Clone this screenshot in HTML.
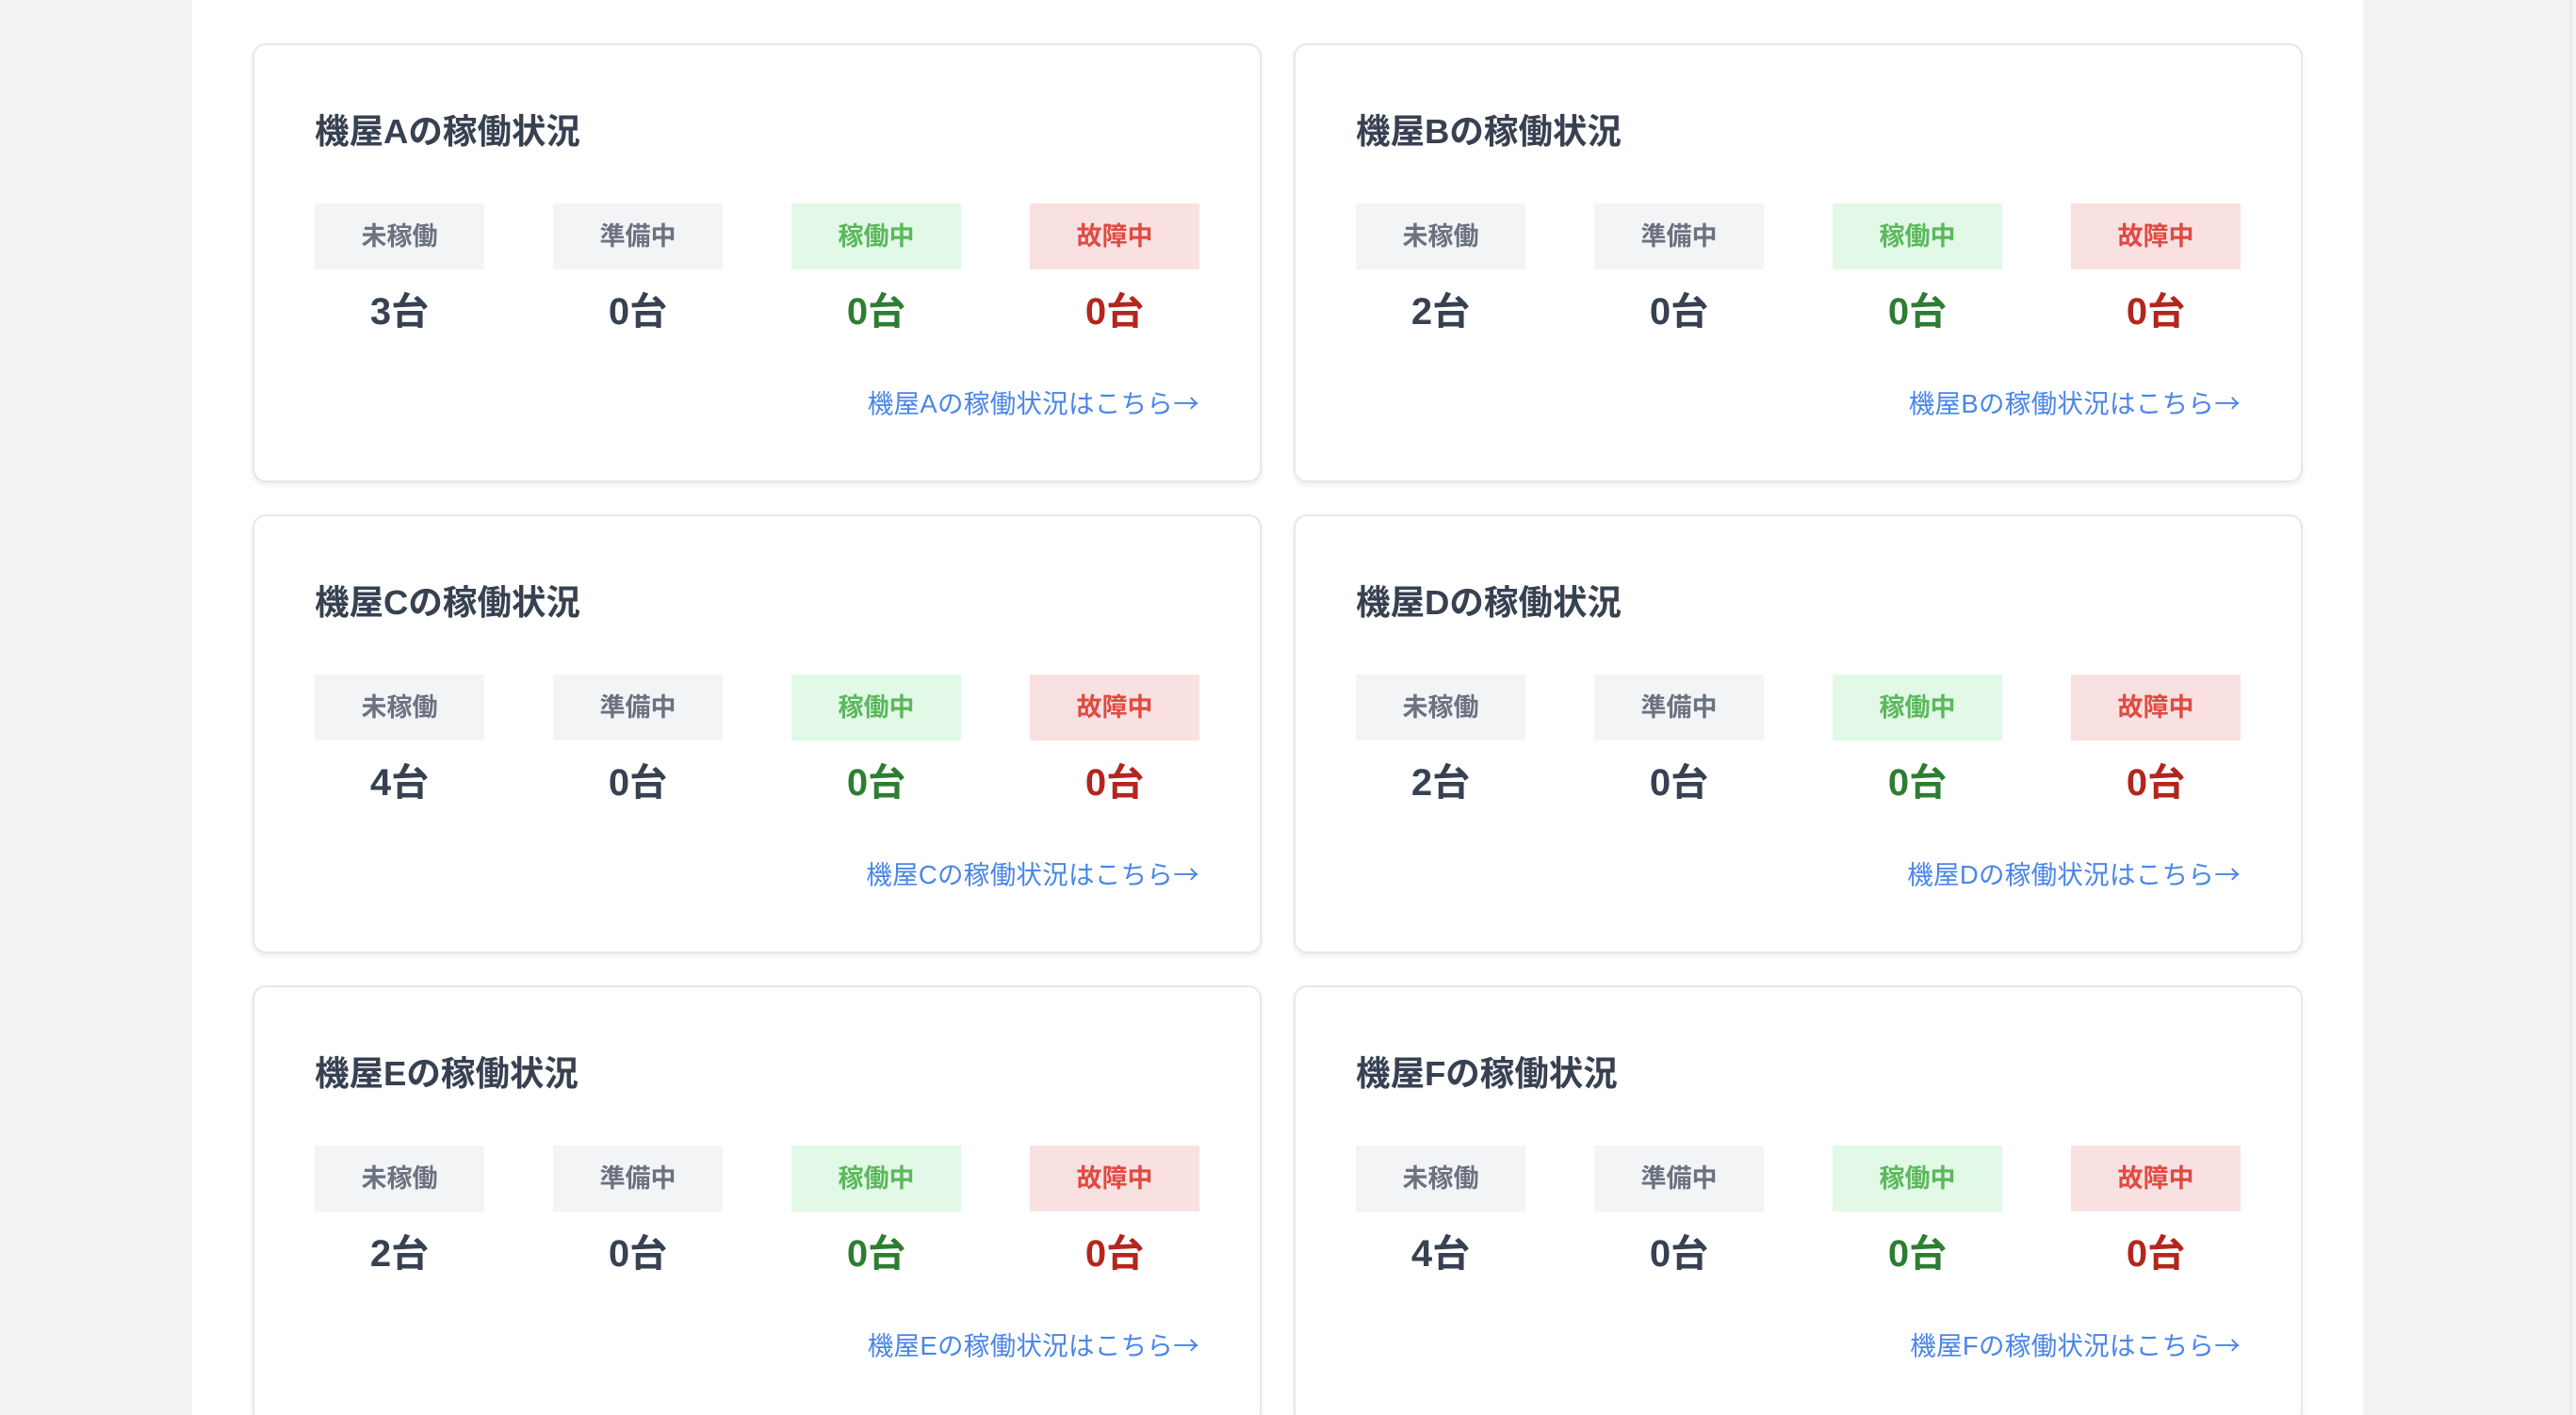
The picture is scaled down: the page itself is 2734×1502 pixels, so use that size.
<!DOCTYPE html>
<html><head><meta charset="utf-8"><style>
*{margin:0;padding:0;box-sizing:border-box}
html,body{width:2734px;height:1502px;overflow:hidden}
body{background:#f2f3f5;font-family:"Liberation Sans","Noto Sans CJK JP",sans-serif;position:relative}
.panel{position:absolute;left:204px;top:0;width:2304px;height:1502px;background:#fff}
.edge{position:absolute;left:2727px;top:0;width:7px;height:1502px;background:linear-gradient(90deg,#e6e7ea,#fafafa)}
.card{position:absolute;width:1071px;height:466px;background:#fff;border:2px solid #e5e7eb;border-radius:14px;box-shadow:0 3px 6px rgba(0,0,0,.07)}
.t{position:absolute;left:64px;top:70px;font-size:36.5px;font-weight:bold;color:#374151;line-height:44px}
.b{position:absolute;top:168px;width:180px;height:70px;line-height:70px;text-align:center;font-size:27px;font-weight:bold}
.n{position:absolute;top:258px;width:180px;text-align:center;font-size:40px;font-weight:bold;line-height:50px}
.g{background:#f3f4f6;color:#6b7280}
.gr{background:#e1f9e6;color:#5cb85c}
.r{background:#f9e1e1;color:#e04a42}
.l{position:absolute;right:64px;top:360px;font-size:27.5px;color:#4a86e8;line-height:36px;letter-spacing:0.3px}
.l span{font-family:"Noto Sans CJK JP",sans-serif}
</style></head><body>
<div class="panel"></div><div class="edge"></div>

<div class="card" style="left:268px;top:46px">
<div class="t">機屋Aの稼働状況</div>
<div class="b g" style="left:64px">未稼働</div><div class="b g" style="left:317px">準備中</div><div class="b gr" style="left:570px">稼働中</div><div class="b r" style="left:823px">故障中</div>
<div class="n" style="left:64px;color:#374151">3台</div><div class="n" style="left:317px;color:#374151">0台</div><div class="n" style="left:570px;color:#2e7d32">0台</div><div class="n" style="left:823px;color:#b3261e">0台</div>
<div class="l">機屋Aの稼働状況はこちら<span>→</span></div></div>

<div class="card" style="left:1373px;top:46px">
<div class="t">機屋Bの稼働状況</div>
<div class="b g" style="left:64px">未稼働</div><div class="b g" style="left:317px">準備中</div><div class="b gr" style="left:570px">稼働中</div><div class="b r" style="left:823px">故障中</div>
<div class="n" style="left:64px;color:#374151">2台</div><div class="n" style="left:317px;color:#374151">0台</div><div class="n" style="left:570px;color:#2e7d32">0台</div><div class="n" style="left:823px;color:#b3261e">0台</div>
<div class="l">機屋Bの稼働状況はこちら<span>→</span></div></div>

<div class="card" style="left:268px;top:546px">
<div class="t">機屋Cの稼働状況</div>
<div class="b g" style="left:64px">未稼働</div><div class="b g" style="left:317px">準備中</div><div class="b gr" style="left:570px">稼働中</div><div class="b r" style="left:823px">故障中</div>
<div class="n" style="left:64px;color:#374151">4台</div><div class="n" style="left:317px;color:#374151">0台</div><div class="n" style="left:570px;color:#2e7d32">0台</div><div class="n" style="left:823px;color:#b3261e">0台</div>
<div class="l">機屋Cの稼働状況はこちら<span>→</span></div></div>

<div class="card" style="left:1373px;top:546px">
<div class="t">機屋Dの稼働状況</div>
<div class="b g" style="left:64px">未稼働</div><div class="b g" style="left:317px">準備中</div><div class="b gr" style="left:570px">稼働中</div><div class="b r" style="left:823px">故障中</div>
<div class="n" style="left:64px;color:#374151">2台</div><div class="n" style="left:317px;color:#374151">0台</div><div class="n" style="left:570px;color:#2e7d32">0台</div><div class="n" style="left:823px;color:#b3261e">0台</div>
<div class="l">機屋Dの稼働状況はこちら<span>→</span></div></div>

<div class="card" style="left:268px;top:1046px">
<div class="t">機屋Eの稼働状況</div>
<div class="b g" style="left:64px">未稼働</div><div class="b g" style="left:317px">準備中</div><div class="b gr" style="left:570px">稼働中</div><div class="b r" style="left:823px">故障中</div>
<div class="n" style="left:64px;color:#374151">2台</div><div class="n" style="left:317px;color:#374151">0台</div><div class="n" style="left:570px;color:#2e7d32">0台</div><div class="n" style="left:823px;color:#b3261e">0台</div>
<div class="l">機屋Eの稼働状況はこちら<span>→</span></div></div>

<div class="card" style="left:1373px;top:1046px">
<div class="t">機屋Fの稼働状況</div>
<div class="b g" style="left:64px">未稼働</div><div class="b g" style="left:317px">準備中</div><div class="b gr" style="left:570px">稼働中</div><div class="b r" style="left:823px">故障中</div>
<div class="n" style="left:64px;color:#374151">4台</div><div class="n" style="left:317px;color:#374151">0台</div><div class="n" style="left:570px;color:#2e7d32">0台</div><div class="n" style="left:823px;color:#b3261e">0台</div>
<div class="l">機屋Fの稼働状況はこちら<span>→</span></div></div>
</body></html>
